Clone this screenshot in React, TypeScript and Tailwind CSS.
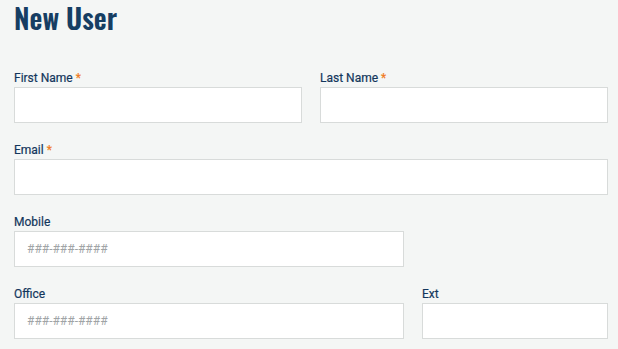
export default function App() {
  const label = "block text-[12px] leading-[16px] mb-[1px] text-[#13365c] [-webkit-text-stroke:0.2px_#13365c]"
  const input =
    "block w-full h-9 bg-white border border-[#d8dbda] px-3 text-[12px] text-[#333] placeholder:text-[#a0a4a6] outline-none"
  const star = <span className="text-[#f07a22] [-webkit-text-stroke:0.2px_#f07a22]"> *</span>

  return (
    <div className="min-h-screen bg-[#f4f6f5] px-[14px] font-['Roboto',sans-serif]">
      <h1 className="text-[28px] leading-[36px] font-semibold text-[#163e63] font-['Oswald','Liberation_Sans_Narrow','DejaVu_Sans_Condensed',sans-serif] mb-[34px]">
        New User
      </h1>

      <div className="flex flex-col gap-[19px] w-[594px]">
        <div className="flex gap-[18px]">
          <div className="flex-1">
            <label className={label}>First Name{star}</label>
            <input className={input} />
          </div>
          <div className="flex-1">
            <label className={label}>Last Name{star}</label>
            <input className={input} />
          </div>
        </div>

        <div>
          <label className={label}>Email{star}</label>
          <input className={input} />
        </div>

        <div className="w-[390px]">
          <label className={label}>Mobile</label>
          <input className={input} placeholder="###-###-####" />
        </div>

        <div className="flex gap-[18px]">
          <div className="w-[390px]">
            <label className={label}>Office</label>
            <input className={input} placeholder="###-###-####" />
          </div>
          <div className="flex-1">
            <label className={label}>Ext</label>
            <input className={input} />
          </div>
        </div>
      </div>
    </div>
  )
}
